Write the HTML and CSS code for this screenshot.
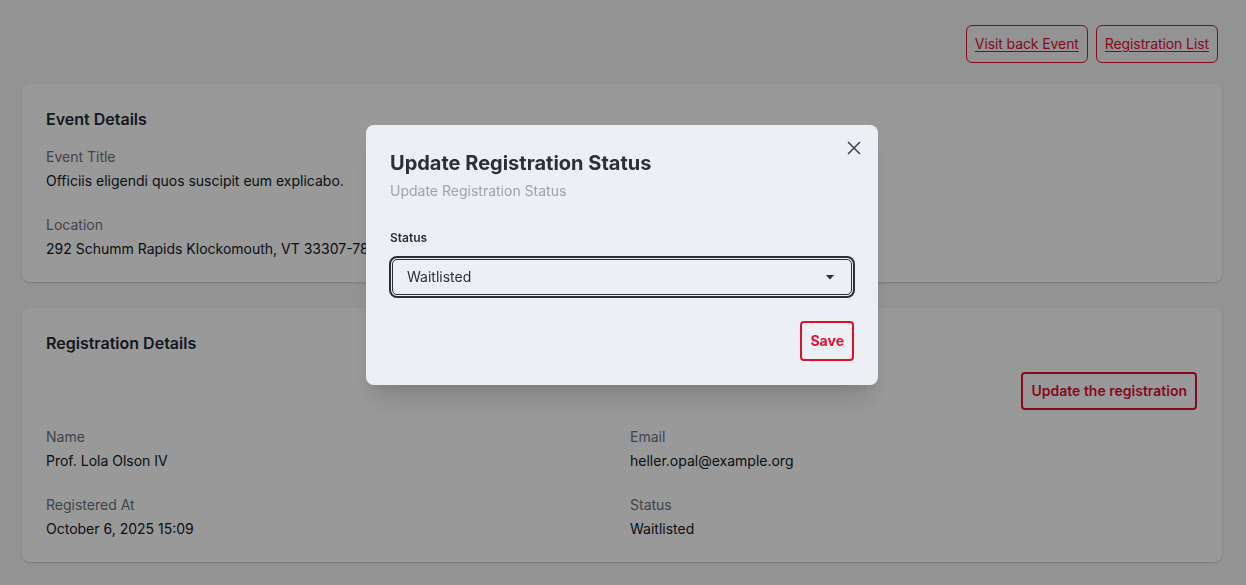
FILE: index.html
```html
<!DOCTYPE html>
<html lang="en">
<head>
<meta charset="utf-8">
<title>Registration</title>
<link rel="stylesheet" href="styles.css">
</head>
<body>
<div class="page">
  <div class="header">
    <a class="link-btn" href="#">Visit back Event</a>
    <a class="link-btn" href="#">Registration List</a>
  </div>

  <section class="card">
    <h2 class="card-title">Event Details</h2>
    <div class="grid">
      <div class="field">
        <div class="label">Event Title</div>
        <div class="value">Officiis eligendi quos suscipit eum explicabo.</div>
      </div>
      <div class="field"></div>
      <div class="field">
        <div class="label">Location</div>
        <div class="value">292 Schumm Rapids Klockomouth, VT 33307-7817</div>
      </div>
    </div>
  </section>

  <section class="card">
    <h2 class="card-title">Registration Details</h2>
    <div class="actions">
      <button class="btn-outline" type="button">Update the registration</button>
    </div>
    <div class="grid">
      <div class="field">
        <div class="label">Name</div>
        <div class="value">Prof. Lola Olson IV</div>
      </div>
      <div class="field">
        <div class="label">Email</div>
        <div class="value">heller.opal@example.org</div>
      </div>
      <div class="field">
        <div class="label">Registered At</div>
        <div class="value">October 6, 2025 15:09</div>
      </div>
      <div class="field">
        <div class="label">Status</div>
        <div class="value">Waitlisted</div>
      </div>
    </div>
  </section>
</div>

<div class="overlay">
  <div class="modal">
    <button class="close" type="button" aria-label="Close">
      <svg width="14" height="14" viewBox="0 0 14 14"><path d="M1.5 1.5L12.5 12.5M12.5 1.5L1.5 12.5" stroke="#3a3f4b" stroke-width="1.5" stroke-linecap="round" fill="none"/></svg>
    </button>
    <h3 class="modal-title">Update Registration Status</h3>
    <p class="modal-sub">Update Registration Status</p>
    <label class="form-label">Status</label>
    <div class="select">
      <span>Waitlisted</span>
      <svg class="caret" width="8" height="5" viewBox="0 0 8 5"><path d="M0 0H8L4 4.5Z" fill="#2b2f3a"/></svg>
    </div>
    <div class="modal-footer">
      <button class="btn-save" type="button">Save</button>
    </div>
  </div>
</div>
</body>
</html>
```

FILE: styles.css
```css
* { box-sizing: border-box; }

html, body {
  margin: 0;
  padding: 0;
}

body {
  background: #f6f6f7;
  font-family: Inter, "Noto Sans", sans-serif;
  color: #111827;
  font-size: 14px;
  line-height: 20px;
  height: 585px;
  overflow: hidden;
}

.page {
  padding: 25px 24px 0 22px;
}

.header {
  display: flex;
  justify-content: flex-end;
  gap: 8px;
  padding-right: 4px;
}

.link-btn {
  display: inline-block;
  border: 1px solid #e0102f;
  border-radius: 6px;
  padding: 8px 8px;
  color: #e0102f;
  text-decoration: underline;
  text-underline-offset: 2px;
  font-size: 14px;
  line-height: 20px;
  letter-spacing: -0.1px;
}

.card {
  background: #ffffff;
  border-radius: 8px;
  box-shadow: 0 1px 3px rgba(0,0,0,0.12), 0 1px 2px rgba(0,0,0,0.06);
  padding: 23px 24px 23px;
  margin-top: 21px;
}

.card + .card {
  margin-top: 26px;
}

.card-title {
  margin: 0 0 16px;
  font-size: 16px;
  line-height: 24px;
  font-weight: 600;
  color: #1f2937;
}

.grid {
  display: grid;
  grid-template-columns: 1fr 1fr;
  column-gap: 16px;
  row-gap: 24px;
}

.label {
  color: #6b7280;
  font-size: 14px;
  line-height: 20px;
  margin-bottom: 4px;
}

.value {
  color: #111827;
  font-size: 14px;
  line-height: 20px;
}

.actions {
  display: flex;
  justify-content: flex-end;
  padding-top: 1px;
  margin-bottom: 17px;
  padding-right: 1px;
}

.btn-outline {
  font-family: inherit;
  background: transparent;
  border: 2px solid #e0102f;
  border-radius: 4px;
  color: #e0102f;
  font-weight: 600;
  font-size: 14px;
  line-height: 20px;
  padding: 7px 8px;
}

.overlay {
  position: fixed;
  inset: 0;
  background: rgba(0, 0, 0, 0.4);
  display: flex;
  justify-content: center;
  align-items: flex-start;
  padding-top: 125px;
  padding-right: 2px;
}

.modal {
  position: relative;
  width: 512px;
  background: #eceff4;
  border-radius: 8px;
  padding: 24px 24px 24px;
  box-shadow: 0 20px 25px -5px rgba(0,0,0,0.12), 0 8px 10px -6px rgba(0,0,0,0.1);
}

.close {
  position: absolute;
  top: 11px;
  right: 12px;
  width: 24px;
  height: 24px;
  padding: 0;
  border: 0;
  background: transparent;
  display: flex;
  align-items: center;
  justify-content: center;
}

.modal-title {
  margin: 0;
  font-size: 20px;
  line-height: 28px;
  font-weight: 700;
  color: #2b2f3a;
}

.modal-sub {
  margin: 4px 0 0;
  color: #9ca3af;
  font-size: 14px;
  line-height: 20px;
}

.form-label {
  display: block;
  margin-top: 27px;
  font-size: 12px;
  line-height: 20px;
  font-weight: 600;
  color: #2b2f3a;
}

.select {
  margin: 11px 2px 0;
  height: 36px;
  border: 1px solid #2b2f3a;
  border-radius: 5px;
  outline: 2px solid #2b2f3a;
  outline-offset: 1px;
  display: flex;
  align-items: center;
  justify-content: space-between;
  padding: 0 17px 0 14px;
  font-size: 14px;
  color: #2b2f3a;
}

.caret {
  display: block;
}

.modal-footer {
  display: flex;
  justify-content: flex-end;
  margin-top: 26px;
}

.btn-save {
  font-family: inherit;
  background: transparent;
  border: 2px solid #e0102f;
  border-radius: 4px;
  color: #e0102f;
  font-weight: 700;
  font-size: 14px;
  line-height: 20px;
  padding: 8px 8px;
}
```
